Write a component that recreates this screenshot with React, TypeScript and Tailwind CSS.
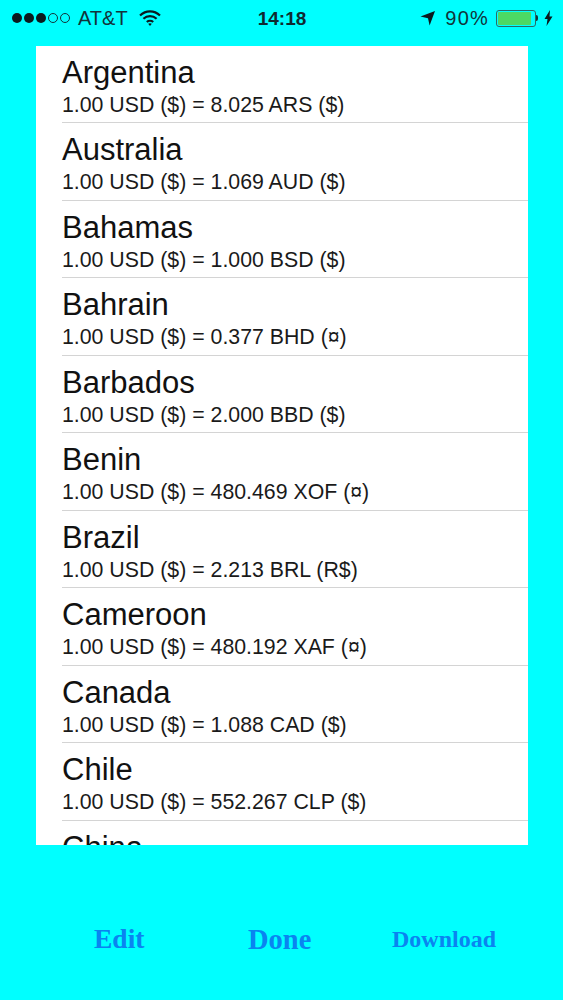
const rates = [
  { country: 'Argentina', rate: '8.025 ARS ($)' },
  { country: 'Australia', rate: '1.069 AUD ($)' },
  { country: 'Bahamas', rate: '1.000 BSD ($)' },
  { country: 'Bahrain', rate: '0.377 BHD (¤)' },
  { country: 'Barbados', rate: '2.000 BBD ($)' },
  { country: 'Benin', rate: '480.469 XOF (¤)' },
  { country: 'Brazil', rate: '2.213 BRL (R$)' },
  { country: 'Cameroon', rate: '480.192 XAF (¤)' },
  { country: 'Canada', rate: '1.088 CAD ($)' },
  { country: 'Chile', rate: '552.267 CLP ($)' },
  { country: 'China', rate: null },
];

function StatusBar() {
  return (
    <div className="h-[46px] flex items-center justify-between pl-[12px] pr-[10px] pb-[10px] text-[#12343a] font-['Liberation_Sans',sans-serif]">
      <div className="flex items-center w-[190px]">
        <div className="flex items-center gap-[2px]">
          <span className="w-[10px] h-[10px] rounded-full bg-[#0b1a1e]" />
          <span className="w-[10px] h-[10px] rounded-full bg-[#0b1a1e]" />
          <span className="w-[10px] h-[10px] rounded-full bg-[#0b1a1e]" />
          <span className="w-[10px] h-[10px] rounded-full border border-[#12343a]" />
          <span className="w-[10px] h-[10px] rounded-full border border-[#12343a]" />
        </div>
        <span className="ml-[8px] text-[20px] leading-none">AT&amp;T</span>
        <svg className="ml-[11px]" width="22" height="16" viewBox="0 0 22 16" fill="none" stroke="#0b1a1e" strokeWidth="2.2">
          <path d="M1 5.5C6.8 0 15.2 0 21 5.5" />
          <path d="M4.4 8.8C8.2 5.2 13.8 5.2 17.6 8.8" />
          <path d="M7.8 12C9.6 10.4 12.4 10.4 14.2 12" />
          <path d="M11 16l-1.8-2.2c1-.8 2.6-.8 3.6 0z" fill="#0b1a1e" stroke="none" />
        </svg>
      </div>
      <span className="text-[19px] leading-none font-bold text-[#0f2a30] -ml-[1px]">14:18</span>
      <div className="flex items-center justify-end w-[190px]">
        <svg width="16" height="16" viewBox="0 0 16 16" fill="#0b1a1e">
          <path d="M15 1L9.6 15.5 8 8.3 0.5 6.6z" />
        </svg>
        <span className="ml-[9px] text-[20px] leading-none tracking-[1.2px]">90%</span>
        <div className="ml-[7px] w-[40px] h-[17px] rounded-[3px] border border-[#2d6a66] p-[1px] flex">
          <div className="w-[33px] bg-[#4cd964] rounded-[1px]" />
        </div>
        <span className="w-[2px] h-[6px] bg-[#12343a] rounded-r-sm" />
        <svg className="ml-[6px]" width="9" height="16" viewBox="0 0 9 16" fill="#0b1a1e">
          <path d="M6 0L0.5 9h3L2.5 16 8.5 6.5h-3z" />
        </svg>
      </div>
    </div>
  );
}

export default function App() {
  return (
    <div className="w-[563px] h-[1000px] bg-[#00ffff] overflow-hidden flex flex-col">
      <StatusBar />

      <div className="ml-[36px] w-[492px] h-[799px] bg-white overflow-hidden font-['Liberation_Sans',sans-serif] text-[#111111] shrink-0">
        {rates.map((item) => (
          <div key={item.country} className="h-[77.5px] first:h-[77px] ml-[26px] border-b border-[#d4d4d4] pt-[8px]">
            <div className="text-[31px] leading-[38px]">{item.country}</div>
            {item.rate && (
              <div className="text-[21.3px] leading-[24px] pt-[1px] text-[#1a1a1a]">1.00 USD ($) = {item.rate}</div>
            )}
          </div>
        ))}
      </div>

      <div className="flex items-center h-[155px] pt-[32px] text-[#0a84f0] font-['Liberation_Serif',serif] font-bold">
        <div className="w-[248px] pl-[94px] text-[27.5px] leading-none">Edit</div>
        <div className="w-[144px] pt-[4px] text-[28.5px] leading-none">Done</div>
        <div className="text-[24px] leading-none">Download</div>
      </div>
    </div>
  );
}
